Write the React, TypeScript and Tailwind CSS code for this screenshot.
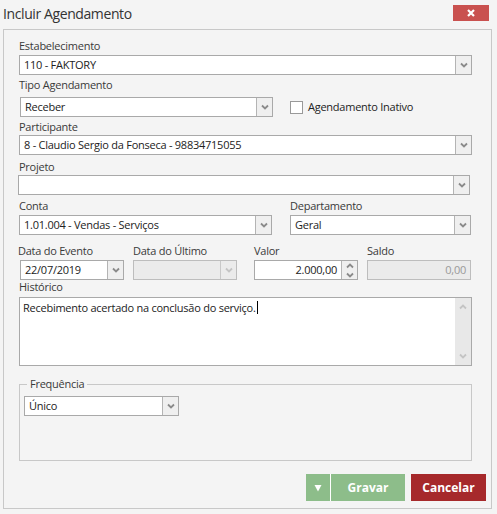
import { ReactNode } from "react";

const FONT = "font-['Open_Sans','Noto_Sans',sans-serif]";

const Chevron = ({ up = false, color = "#8a8a8a" }: { up?: boolean; color?: string }) => (
  <svg width="8" height="6" viewBox="0 0 8 6" className={up ? "rotate-180" : ""}>
    <path d="M1 1.5 L4 4.5 L7 1.5" fill="none" stroke={color} strokeWidth="1.8" />
  </svg>
);

const Label = ({ children, className = "" }: { children: ReactNode; className?: string }) => (
  <div className={`h-4 text-[11px] leading-4 tracking-[-0.25px] text-[#3a3a3a] ${className}`}>{children}</div>
);

type SelectProps = {
  value?: string;
  className?: string;
  disabled?: boolean;
};

const Select = ({ value = "", className = "", disabled = false }: SelectProps) => (
  <div
    className={`flex h-5 border ${
      disabled ? "border-[#bdbdbd] bg-[#ebebeb]" : "border-[#a9a9a9] bg-white"
    } ${className}`}
  >
    <div className="flex-1 truncate pl-1 text-[11px] leading-[18px] tracking-[-0.25px] text-[#222]">{value}</div>
    <div
      className={`flex w-4 items-center justify-center border-l ${
        disabled ? "border-[#c8c8c8] bg-[#ebebeb]" : "border-[#b4b4b4] bg-[#efefef]"
      }`}
    >
      <Chevron color={disabled ? "#c4c4c4" : "#8a8a8a"} />
    </div>
  </div>
);

export default function App() {
  return (
    <div className={`h-[514px] w-[497px] bg-[#f4f4f4] ${FONT}`}>
      {/* title bar */}
      <div className="flex h-[29px] items-start justify-between">
        <h1 className="pl-[3px] pt-[4px] text-[14px] leading-5 tracking-[-0.4px] text-[#333]">Incluir Agendamento</h1>
        <button className="mr-2 mt-[5px] flex h-4 w-9 items-center justify-center bg-[#c9514f]">
          <svg width="10" height="10" viewBox="0 0 10 10">
            <path d="M2 2 L8 8 M8 2 L2 8" stroke="white" strokeWidth="2.2" />
          </svg>
        </button>
      </div>

      {/* panel */}
      <div className="mx-[3px] flex h-[480px] w-[489px] flex-col border border-[#c8c8c8]">
        <div className="pl-[15px] pr-[19px] pt-2">
          <Label>Estabelecimento</Label>
          <Select value="110 - FAKTORY" className="mt-px" />

          <Label className="mt-0.5">Tipo Agendamento</Label>
          <div className="mt-1 flex items-center">
            <Select value="Receber" className="ml-px w-[253px]" />
            <div className="ml-[17px] h-[13px] w-[13px] border border-[#999] bg-white" />
            <span className="ml-[5px] text-[11px] tracking-[-0.25px] text-[#222]">Agendamento Inativo</span>
          </div>

          <Label className="mt-0.5">Participante</Label>
          <Select value="8 - Claudio Sergio da Fonseca - 98834715055" />

          <Label className="mt-1">Projeto</Label>
          <Select className="-ml-px w-[452px]" />

          <div className="mt-[3px] flex">
            <div className="w-[253px]">
              <Label>Conta</Label>
              <Select value="1.01.004 - Vendas - Serviços" className="mt-px" />
            </div>
            <div className="ml-[18px] w-[181px]">
              <Label>Departamento</Label>
              <Select value="Geral" className="mt-px" />
            </div>
          </div>

          <div className="mt-2 flex">
            <div className="w-[105px]">
              <Label className="-ml-px">Data do Evento</Label>
              <Select value="22/07/2019" className="ml-px mt-px w-[104px]" />
            </div>
            <div className="ml-[9px] w-[104px]">
              <Label>Data do Último</Label>
              <Select disabled className="mt-px" />
            </div>
            <div className="ml-[17px] w-[104px]">
              <Label>Valor</Label>
              <div className="mt-px flex h-5 border border-[#a9a9a9] bg-white">
                <div className="flex-1 pr-1 text-right text-[11px] leading-[18px] tracking-[-0.25px] text-[#222]">2.000,00</div>
                <div className="flex w-4 flex-col items-center justify-center gap-[3px] border-l border-[#b4b4b4] bg-[#efefef]">
                  <Chevron up />
                  <Chevron />
                </div>
              </div>
            </div>
            <div className="ml-[9px] w-[104px]">
              <Label>Saldo</Label>
              <div className="mt-px h-5 border border-[#bdbdbd] bg-[#ebebeb] pr-1 text-right text-[11px] leading-[18px] tracking-[-0.25px] text-[#9a9a9a]">
                0,00
              </div>
            </div>
          </div>

          <Label className="-mt-px">Histórico</Label>
          <div className="mt-0.5 flex h-[69px] border border-[#a9a9a9] bg-white">
            <div className="flex-1 pl-[3px] pt-px text-[11px] leading-4 tracking-[-0.25px] text-[#222]">
              Recebimento acertado na conclusão do serviço.
              <span className="ml-px inline-block h-[13px] w-px translate-y-[2px] bg-black" />
            </div>
            <div className="flex w-4 flex-col items-center justify-between bg-[#e8e8e8] py-[6px]">
              <Chevron up color="#c4c4c4" />
              <Chevron color="#c4c4c4" />
            </div>
          </div>

          <fieldset className="mt-[10px] border border-[#c8c8c8] pb-[44px] pl-1">
            <legend className="ml-[3px] px-[3px] text-[11px] leading-4 tracking-[-0.25px] text-[#3a3a3a]">Frequência</legend>
            <Select value="Único" className="mt-[4px] w-[155px]" />
          </fieldset>
        </div>

        <div className="mt-[13px] flex justify-end gap-[6px] pr-[5px]">
          <div className="flex h-[27px] bg-[#8dbd8a]">
            <button className="flex w-6 items-center justify-center">
              <svg width="8" height="8" viewBox="0 0 8 8">
                <path d="M0.5 1 L7.5 1 L4 7.5 Z" fill="white" />
              </svg>
            </button>
            <div className="w-px bg-white" />
            <button className="w-[74px] text-[12px] font-bold text-white">Gravar</button>
          </div>
          <button className="h-[27px] w-[75px] bg-[#a6292b] text-[12px] font-bold text-white">Cancelar</button>
        </div>
      </div>
    </div>
  );
}
